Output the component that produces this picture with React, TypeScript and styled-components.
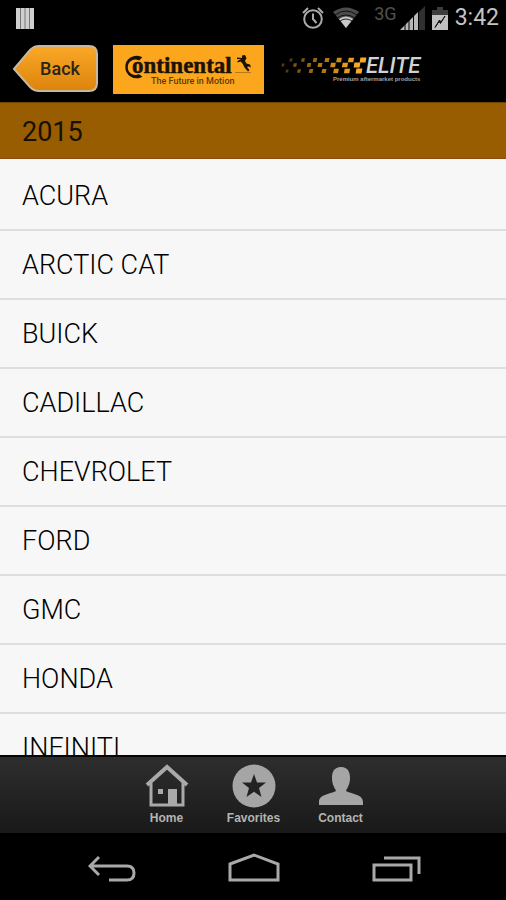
import React from "react";
import styled, { createGlobalStyle } from "styled-components";

const GlobalStyle = createGlobalStyle`
  *, *::before, *::after { box-sizing: border-box; }
  body { margin: 0; background: #000; font-family: Roboto, "Liberation Sans", sans-serif; }
`;

const Screen = styled.div`
  display: flex;
  flex-direction: column;
  height: 100vh;
  overflow: hidden;
  background: #000;
`;

const StatusBar = styled.div`
  display: flex;
  flex: none;
  align-items: center;
  justify-content: space-between;
  height: 36px;
  padding: 0 7px 0 16px;
`;

const StatusIcons = styled.div`
  display: flex;
  align-items: center;
  gap: 7px;
`;

const Network = styled.span`
  align-self: flex-start;
  margin: 4px -4px 0 7px;
  font-size: 18px;
  line-height: 20px;
  color: #505050;
`;

const Clock = styled.time`
  font-size: 23px;
  line-height: 36px;
  color: #c4c4c4;
`;

const Header = styled.header`
  display: flex;
  flex: none;
  align-items: center;
  height: 66px;
  padding: 0 12px;
`;

const BackButton = styled.button`
  display: grid;
  flex: none;
  width: 88px;
  height: 48px;
  margin-right: 13px;
  padding: 0;
  border: 0;
  background: none;
  cursor: pointer;

  > * { grid-area: 1 / 1; }
`;

const BackLabel = styled.span`
  z-index: 1;
  align-self: center;
  padding-left: 8px;
  font: 500 18px/24px Roboto, sans-serif;
  color: #2b2418;
`;

const Logos = styled.div`
  display: flex;
  flex: none;
  align-items: center;
  gap: 7px;
`;

const Logo = styled.svg`
  display: block;
  flex: none;
`;

const YearBar = styled.h1`
  flex: none;
  margin: 0;
  padding: 3px 22px 0;
  border-top: 1px solid #6f4400;
  border-bottom: 1px solid #8a4a10;
  background: #985d00;
  font-size: 27px;
  font-weight: 400;
  line-height: 52px;
  color: #191004;
`;

const List = styled.ul`
  flex: 1;
  min-height: 0;
  margin: 0;
  padding: 3px 0 0;
  overflow: hidden;
  list-style: none;
  background: #f7f7f7;
`;

const Item = styled.li`
  border-bottom: 2px solid #dedede;
`;

const ItemLink = styled.a`
  display: block;
  padding: 2px 22px 0;
  font-size: 27px;
  font-weight: 300;
  line-height: 65px;
  color: #000;
  text-decoration: none;
`;

const TabBar = styled.nav`
  display: flex;
  flex: none;
  justify-content: center;
  height: 78px;
  padding-left: 1px;
  border-top: 2px solid #050505;
  background: linear-gradient(#2e2e2e, #191919);
`;

const Tab = styled.a`
  display: flex;
  flex-direction: column;
  align-items: center;
  gap: 2px;
  width: 87px;
  padding-top: 7px;
  font: 700 12px/16px "Liberation Sans", sans-serif;
  color: #b4b4b4;
  text-decoration: none;
`;

const SystemBar = styled.div`
  display: flex;
  flex: none;
  justify-content: center;
  gap: 92px;
  height: 67px;
  padding: 16px 0 0 2px;
  background: #000;
`;

const SystemButton = styled.button`
  height: 34px;
  padding: 0;
  border: 0;
  background: none;
  cursor: pointer;
`;

const makes = ["ACURA", "ARCTIC CAT", "BUICK", "CADILLAC", "CHEVROLET", "FORD", "GMC", "HONDA", "INFINITI"];

const trail = [
  { y: 15, xs: [20, 32, 44, 56, 68, 80, 92] },
  { y: 20, xs: [12, 24, 38, 49, 62, 74, 86] },
  { y: 26, xs: [16, 28, 40, 53, 65, 76, 88] },
];

const shades = ["#5a3c0c", "#805710", "#986614", "#b27816", "#d08c1a", "#e89c1e", "#fbaa24"];

function AlarmIcon() {
  return (
    <svg width="24" height="24" viewBox="0 0 24 24" fill="none" stroke="#a9a9a9" strokeWidth="2" aria-label="Alarm">
      <circle cx="12" cy="13" r="8.8" />
      <path d="M12 7.5V13l3.500 4M2 7l5-5M22 7l-5-5" />
    </svg>
  );
}

function WifiIcon() {
  return (
    <svg width="28" height="22" viewBox="0 0 28 22" aria-label="Wi-Fi">
      <path d="M1 5Q14-4 27 5L14 21Z" fill="#4c4c4c" />
      <path d="M7 12Q14 7 21 12L14 21Z" fill="#c9c9c9" />
      <path d="M3 8Q14 0 25 8M5 11Q14 5 23 11M8 14Q14 10 20 14" fill="none" stroke="#000" strokeWidth="0.800" />
    </svg>
  );
}

function SignalIcon() {
  return (
    <svg width="25" height="24" viewBox="0 0 25 24" aria-label="Signal">
      <path d="M19 6L25 0V24H19Z" fill="#303030" />
      <path d="M0 24L18 6V24Z" fill="#b7b7b7" />
      <path d="M5 16V24M9 12V24M13.500 8V24M18.500 4V24" stroke="#000" />
    </svg>
  );
}

function BatteryIcon() {
  return (
    <svg width="16" height="23" viewBox="0 0 16 23" aria-label="Battery charging">
      <path d="M5 0H11V3H16V9H0V3H5Z" fill="#3d3d3d" />
      <path d="M0 8H16V23H0Z" fill="#c0c0c0" />
      <path d="M13 9L8.500 16.500L7 14.500L3 20.500L7.500 13L9 15Z" fill="#111" stroke="#111" />
    </svg>
  );
}

function ContinentalLogo() {
  return (
    <Logo width="151" height="49" viewBox="0 0 151 49" role="img" aria-label="Continental">
      <rect width="151" height="49" fill="#fca61d" />
      <g fill="#1c1204">
        <path d="M28 12.500A10.500 10.500 0 1 0 28 31.500L26 30A8.500 8.500 0 1 1 26 14.500Z" stroke="#1c1204" strokeWidth="1.500" />
        <text x="19" y="28" fontFamily="Liberation Serif, serif" fontWeight="700" fontSize="23" stroke="#1c1204" strokeWidth="0.500">ontinental</text>
        <text x="38" y="39" fontFamily="Roboto, sans-serif" fontWeight="500" fontSize="9" fill="#5a3b08">The Future in Motion</text>
        <path d="M129 10.500L132 10L133.500 13L132 16L133.500 18.500L137 19.500L138 22.500L136 21.500L134 22L136.500 25L135 26.500L131.500 22.500L129.500 18.500L127.500 16.500L124.500 17.500V16L128 14L124 14V12.500L129 13Z" />
        <path d="M122 27.500H138" stroke="#b5781b" />
      </g>
    </Logo>
  );
}

function EliteLogo() {
  return (
    <Logo width="152" height="48" viewBox="0 0 152 48" role="img" aria-label="Elite premium aftermarket products">
      {trail.map((row) =>
        row.xs.map((x, i) => {
          const w = 1.3 + i * 0.28;
          const h = 1.6 + i * 0.15;
          return (
            <path
              key={`${row.y}-${x}`}
              d={`M${x - w + 0.4} ${row.y - h}H${x + w + 0.4}L${x + w - 0.4} ${row.y + h}H${x - w - 0.4}Z`}
              fill={shades[i]}
            />
          );
        }),
      )}
      <text x="95" y="28" fontFamily="Roboto, sans-serif" fontStyle="italic" fontWeight="500" fontSize="22" fill="#d2d2d2">ELITE</text>
      <text x="62" y="36" fontFamily="Liberation Sans, sans-serif" fontWeight="700" fontSize="6" fill="#a0a0a0">Premium aftermarket products</text>
    </Logo>
  );
}

function HomeIcon() {
  return (
    <svg width="46" height="44" viewBox="0 0 46 44" fill="#a9a9a9">
      <path d="M3 21L23 3L43 21" fill="none" stroke="#a9a9a9" strokeWidth="4" />
      <path d="M7 19V41H39V19" fill="none" stroke="#a9a9a9" strokeWidth="3" />
      <path d="M14 25H19V30H14ZM24 25H33V41H24Z" />
    </svg>
  );
}

function FavoritesIcon() {
  return (
    <svg width="46" height="44" viewBox="0 0 46 44">
      <circle cx="23" cy="22" r="21.500" fill="#a5a5a5" />
      <path d="M23 10L26 18.500H35L28 24L30.500 33L23 27.800L15.500 33L18 24L11 18.500H20Z" fill="#222" />
    </svg>
  );
}

function ContactIcon() {
  return (
    <svg width="46" height="44" viewBox="0 0 46 44">
      <path d="M23 3C30 3 32 8 32 14C32 21 29 24 28 27C33 30 45 30 45 38V41H1V38C1 30 13 30 18 27C17 24 14 21 14 14C14 8 16 3 23 3Z" fill="#a5a5a5" />
    </svg>
  );
}

export default function App() {
  return (
    <>
      <GlobalStyle />
      <Screen>
        <StatusBar>
          <svg width="18" height="21" viewBox="0 0 18 21" aria-label="Notification">
            <path d="M0 0H18V21H0Z" fill="#cfcfcf" />
            <path d="M4.500 0V21M9 0V21M13.500 0V21" stroke="#777" />
          </svg>
          <StatusIcons>
            <AlarmIcon />
            <WifiIcon />
            <Network>3G</Network>
            <SignalIcon />
            <BatteryIcon />
            <Clock>3:42</Clock>
          </StatusIcons>
        </StatusBar>
        <Header>
          <BackButton type="button">
            <svg width="88" height="48" viewBox="0 0 88 48" aria-hidden="true">
              <defs>
                <linearGradient id="backFill" x1="0" y1="0" x2="0" y2="1">
                  <stop offset="0" stopColor="#fba827" />
                  <stop offset="1" stopColor="#dc830c" />
                </linearGradient>
              </defs>
              <path d="M2 24L18 5Q22 1 27 1H77Q85 1 85 9V38Q85 46 77 46H27Q22 46 18 42Z" fill="url(#backFill)" stroke="#c9b7a0" strokeWidth="2" />
            </svg>
            <BackLabel>Back</BackLabel>
          </BackButton>
          <Logos>
            <ContinentalLogo />
            <EliteLogo />
          </Logos>
        </Header>
        <YearBar>2015</YearBar>
        <List>
          {makes.map((make) => (
            <Item key={make}>
              <ItemLink href={`#${make.toLowerCase().replace(" ", "-")}`}>{make}</ItemLink>
            </Item>
          ))}
        </List>
        <TabBar>
          <Tab href="#home"><HomeIcon />Home</Tab>
          <Tab href="#favorites"><FavoritesIcon />Favorites</Tab>
          <Tab href="#contact"><ContactIcon />Contact</Tab>
        </TabBar>
        <SystemBar>
          <SystemButton type="button" aria-label="Back">
            <svg width="48" height="34" viewBox="0 0 48 34" fill="none" stroke="#a9a9a9" strokeWidth="3">
              <path d="M2 17H39Q46 17 46 24Q46 31 39 31H21M11 8L2 17L11 26" />
            </svg>
          </SystemButton>
          <SystemButton type="button" aria-label="Home">
            <svg width="52" height="34" viewBox="0 0 52 34" fill="none" stroke="#a9a9a9" strokeWidth="3">
              <path d="M2 15L26 6L50 15V31H2Z" />
            </svg>
          </SystemButton>
          <SystemButton type="button" aria-label="Recent apps">
            <svg width="49" height="34" viewBox="0 0 49 34" fill="none" stroke="#a9a9a9" strokeWidth="3">
              <path d="M2 16H39V31H2ZM12 9H47V25" />
            </svg>
          </SystemButton>
        </SystemBar>
      </Screen>
    </>
  );
}
